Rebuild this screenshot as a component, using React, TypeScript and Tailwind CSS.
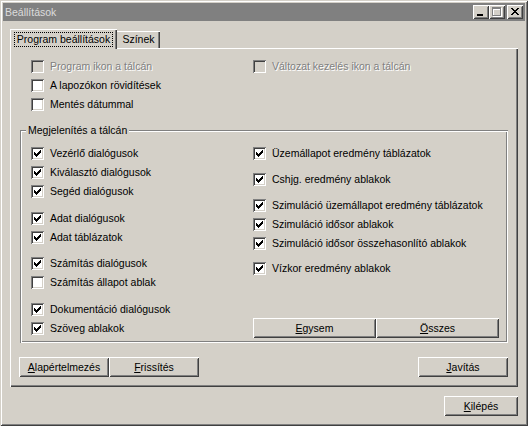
import type { ReactNode } from 'react';

const btnFrame =
  'shadow-[inset_1px_1px_0_#ffffff,inset_-1px_-1px_0_#404040,inset_2px_2px_0_#d4d0c8,inset_-2px_-2px_0_#808080]';

function CheckMark() {
  return (
    <svg width="7" height="7" viewBox="0 0 7 7" shapeRendering="crispEdges">
      <path
        fill="#000"
        d="M0 2h1v3H0zM1 3h1v3H1zM2 4h1v3H2zM3 3h1v3H3zM4 2h1v3H4zM5 1h1v3H5zM6 0h1v3H6z"
      />
    </svg>
  );
}

function Check({
  label,
  checked = false,
  disabled = false,
  className = '',
}: {
  label: string;
  checked?: boolean;
  disabled?: boolean;
  className?: string;
}) {
  return (
    <div className={`flex h-[19px] items-center ${className}`}>
      <span
        className={`flex h-[13px] w-[13px] shrink-0 items-center justify-center shadow-[inset_1px_1px_0_#808080,inset_-1px_-1px_0_#ffffff,inset_2px_2px_0_#404040,inset_-2px_-2px_0_#d4d0c8] ${
          disabled ? 'bg-[#d4d0c8]' : 'bg-white'
        }`}
      >
        {checked && <CheckMark />}
      </span>
      <span
        className={`ml-[6px] whitespace-nowrap ${
          disabled ? 'text-[#808080] [text-shadow:1px_1px_0_#ffffff]' : 'text-black'
        }`}
      >
        {label}
      </span>
    </div>
  );
}

function Btn({
  hot,
  rest,
  className = '',
}: {
  hot: string;
  rest: string;
  className?: string;
}) {
  return (
    <button
      className={`flex h-[20px] items-center justify-center bg-[#d4d0c8] text-black ${btnFrame} ${className}`}
    >
      <span>
        <u>{hot}</u>
        {rest}
      </span>
    </button>
  );
}

function CaptionButton({ children, gap = false }: { children: ReactNode; gap?: boolean }) {
  return (
    <span
      className={`flex h-[14px] w-[16px] items-start bg-[#d4d0c8] ${btnFrame} ${gap ? 'ml-[2px]' : ''}`}
    >
      {children}
    </span>
  );
}

function TitleBar() {
  return (
    <div className="flex h-[18px] items-center bg-[#808080] pl-[2px] pr-[2px]">
      <span className="text-[#dcdcdc]">Beállítások</span>
      <div className="ml-auto flex">
        <CaptionButton>
          <svg className="ml-[4px] mt-[9px]" width="6" height="2" shapeRendering="crispEdges">
            <rect width="6" height="2" fill="#000" />
          </svg>
        </CaptionButton>
        <CaptionButton>
          <svg className="ml-[3px] mt-[2px]" width="10" height="10" shapeRendering="crispEdges">
            <path
              fill="#ffffff"
              transform="translate(1 1)"
              d="M0 0h9v2H0zM0 2h1v7H0zM8 2h1v7H8zM0 8h9v1H0z"
            />
            <path fill="#808080" d="M0 0h9v2H0zM0 2h1v7H0zM8 2h1v7H8zM0 8h9v1H0z" />
          </svg>
        </CaptionButton>
        <CaptionButton gap>
          <svg className="ml-[4px] mt-[3px]" width="8" height="7" shapeRendering="crispEdges">
            <path
              fill="#000"
              d="M0 0h2v1H0zM6 0h2v1H6zM1 1h2v1H1zM5 1h2v1H5zM2 2h4v1H2zM3 3h2v1H3zM2 4h4v1H2zM1 5h2v1H1zM5 5h2v1H5zM0 6h2v1H0zM6 6h2v1H6z"
            />
          </svg>
        </CaptionButton>
      </div>
    </div>
  );
}

function Tabs() {
  return (
    <div className="relative z-10 flex h-[20px] items-end">
      <div className="-mb-px flex h-[20px] w-[107px] items-center justify-center bg-[#d4d0c8] shadow-[inset_1px_1px_0_#ffffff,inset_-1px_0_0_#404040,inset_-2px_0_0_#808080]">
        <span className="flex h-[15px] items-center border border-dotted border-black px-[2px]">
          Program beállítások
        </span>
      </div>
      <div className="flex h-[17px] w-[43px] items-center justify-center bg-[#d4d0c8] shadow-[inset_0_1px_0_#ffffff,inset_-1px_0_0_#404040,inset_-2px_0_0_#808080]">
        Színek
      </div>
    </div>
  );
}

function TaskbarGroup() {
  return (
    <div className="relative ml-[10px] mt-[16px] flex w-[488px] pb-[5px] pl-[11px] pr-[9px] pt-[14px] shadow-[inset_1px_1px_0_#808080,inset_-1px_-1px_0_#ffffff,inset_2px_2px_0_#ffffff,inset_-2px_-2px_0_#808080]">
      <span className="absolute left-[6px] top-[-6px] bg-[#d4d0c8] px-[2px] leading-[13px]">
        Megjelenítés a tálcán
      </span>
      <div className="flex w-[222px] flex-col">
        <Check checked label="Vezérlő dialógusok" />
        <Check checked label="Kiválasztó dialógusok" />
        <Check checked label="Segéd dialógusok" />
        <Check checked label="Adat dialógusok" className="mt-[8px]" />
        <Check checked label="Adat táblázatok" />
        <Check checked label="Számítás dialógusok" className="mt-[7px]" />
        <Check label="Számítás állapot ablak" />
        <Check checked label="Dokumentáció dialógusok" className="mt-[8px]" />
        <Check checked label="Szöveg ablakok" />
      </div>
      <div className="flex flex-1 flex-col">
        <Check checked label="Üzemállapot eredmény táblázatok" />
        <Check checked label="Cshjg. eredmény ablakok" className="mt-[7px]" />
        <Check checked label="Szimuláció üzemállapot eredmény táblázatok" className="mt-[7px]" />
        <Check checked label="Szimuláció idősor ablakok" />
        <Check checked label="Szimuláció idősor összehasonlító ablakok" />
        <Check checked label="Vízkor eredmény ablakok" className="mt-[6px]" />
        <div className="mt-auto flex">
          <Btn hot="E" rest="gysem" className="w-[123px]" />
          <Btn hot="Ö" rest="sszes" className="w-[123px]" />
        </div>
      </div>
    </div>
  );
}

export default function App() {
  return (
    <div className="flex h-[426px] w-[528px] flex-col bg-[#d4d0c8] p-[3px] font-['Liberation_Sans',Arial,sans-serif] text-[10.5px] leading-none text-black shadow-[inset_1px_1px_0_#d4d0c8,inset_-1px_-1px_0_#404040,inset_2px_2px_0_#ffffff,inset_-2px_-2px_0_#808080]">
      <TitleBar />
      <div className="mt-[7px] flex flex-col px-[7px]">
        <Tabs />
        <div className="flex h-[339px] w-[508px] flex-col shadow-[inset_1px_1px_0_#ffffff,inset_-1px_-1px_0_#404040,inset_-2px_-2px_0_#808080]">
          <div className="mt-[9px] flex pl-[21px]">
            <div className="flex w-[222px] flex-col">
              <Check disabled label="Program ikon a tálcán" />
              <Check label="A lapozókon rövidítések" />
              <Check label="Mentés dátummal" />
            </div>
            <Check disabled label="Változat kezelés ikon a tálcán" />
          </div>
          <TaskbarGroup />
          <div className="ml-[9px] mr-[10px] mt-[14px] flex">
            <Btn hot="A" rest="lapértelmezés" className="w-[90px]" />
            <Btn hot="F" rest="rissítés" className="w-[90px]" />
            <Btn hot="J" rest="avítás" className="ml-auto w-[90px]" />
          </div>
        </div>
        <Btn hot="K" rest="ilépés" className="mt-[9px] w-[74px] self-end" />
      </div>
    </div>
  );
}
